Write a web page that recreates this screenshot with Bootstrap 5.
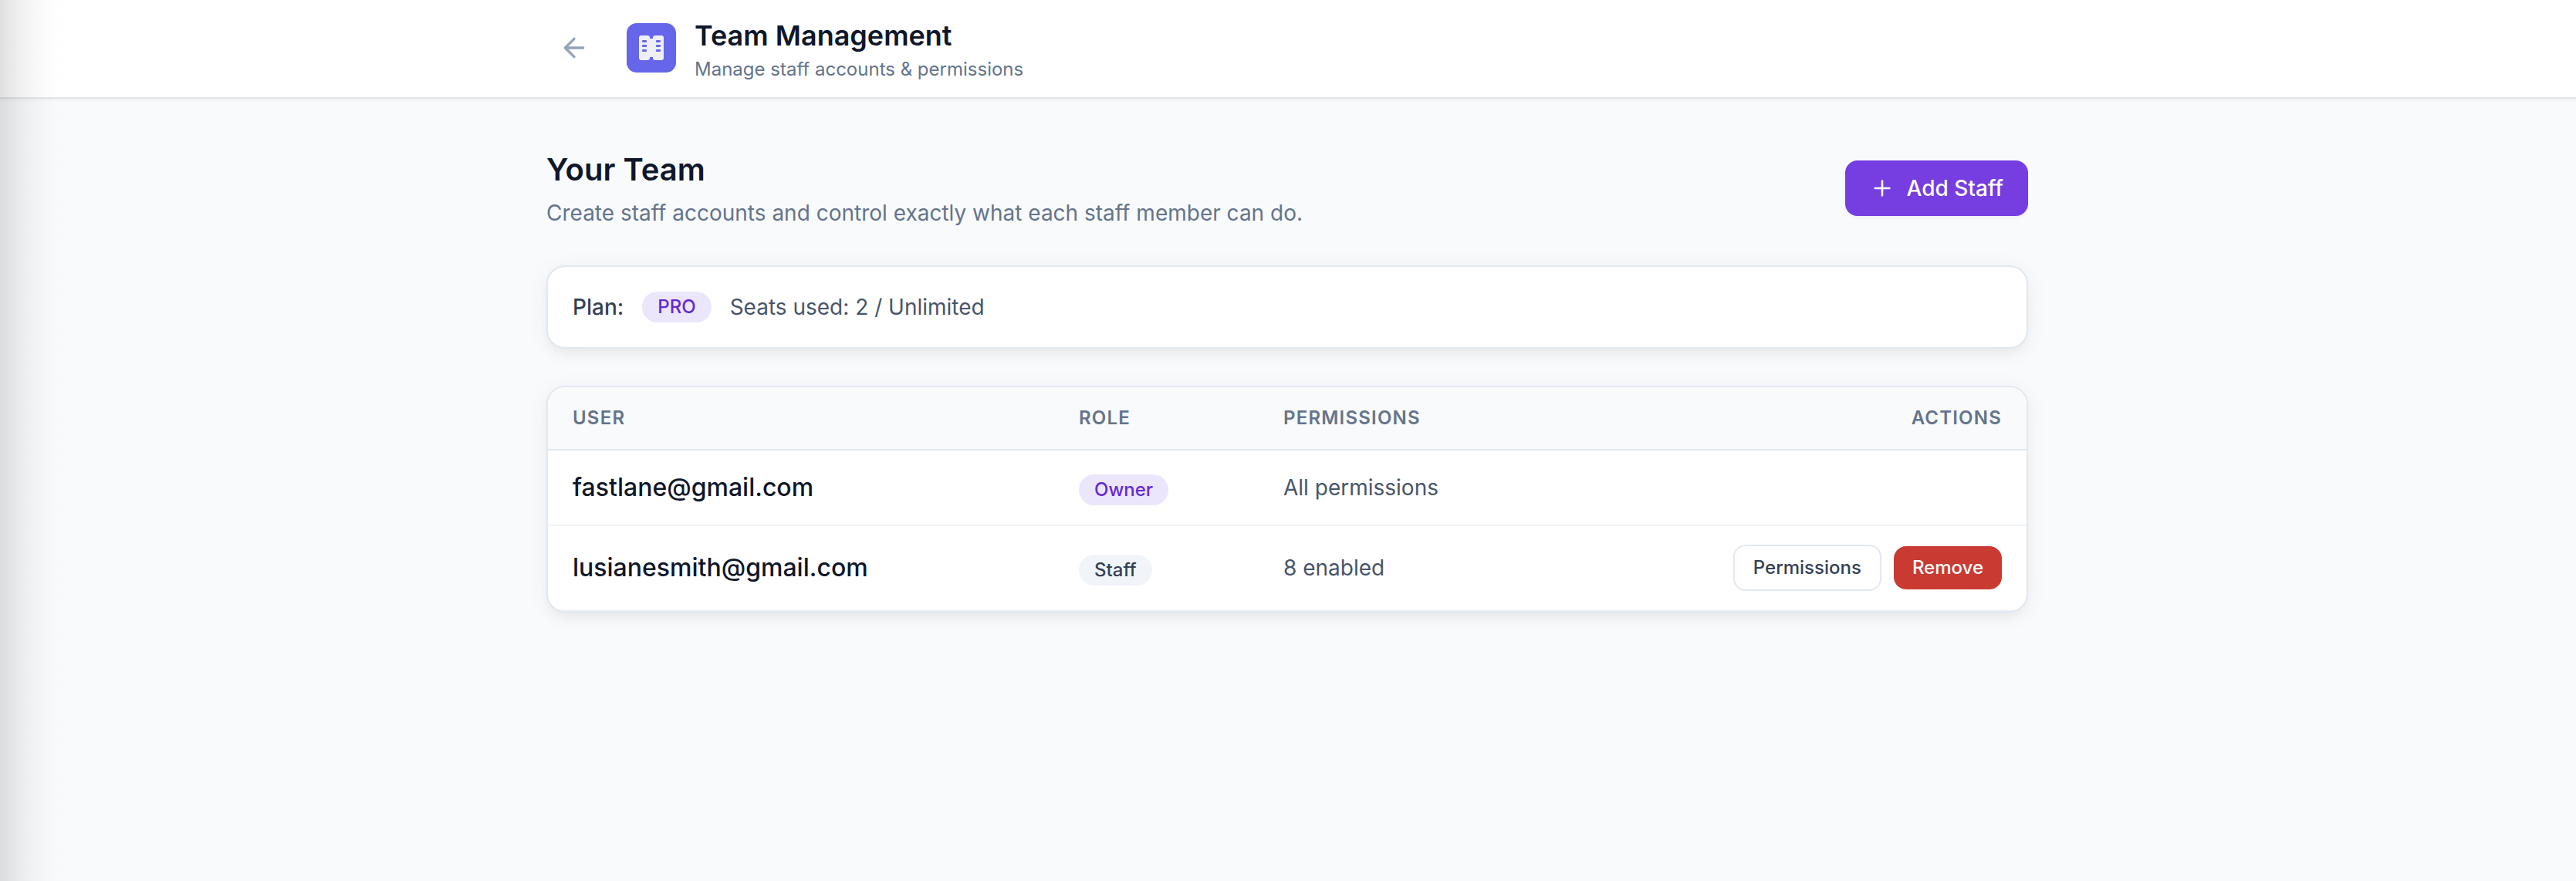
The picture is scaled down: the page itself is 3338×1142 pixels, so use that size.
<!DOCTYPE html>
<html lang="en">
<head>
<meta charset="utf-8">
<meta name="viewport" content="width=device-width, initial-scale=1">
<title>Team Management</title>
<link rel="stylesheet" href="https://cdn.jsdelivr.net/npm/bootstrap@5.3.0/dist/css/bootstrap.min.css">
<style>
body{font-family:Inter,sans-serif;background:#f8fafc;color:#0f172a;min-height:1142px}
.page-wrap{width:1920px;margin-left:708px}
.topbar{height:128px;background:#fff;border-bottom:2px solid #e0e5ea;box-shadow:0 2px 4px rgba(0,0,0,.04)}
.topbar .page-wrap{height:124px}
.back-link{width:72px;height:72px;color:#94a3b8}
.app-tile{width:64px;height:64px;border-radius:13px;background:#6566e9;margin-left:32px;margin-right:24px}
.app-text{padding-top:24px}
.app-title{font-size:36px;line-height:45px;font-weight:600}
.app-sub{font-size:24px;line-height:32px;color:#64748b;margin-top:5px}
.main-area{padding-top:64px}
.sect-title{font-size:40px;line-height:56px;font-weight:600}
.sect-sub{font-size:28px;line-height:40px;color:#64748b;margin-top:8px}
.btn-add{height:72px;border-radius:16px;font-size:28px;font-weight:500;padding:0 32px;border:0;box-shadow:0 2px 4px rgba(0,0,0,.05)}
.btn-add,.btn-add:hover{background:#763de0;color:#fff}
.panel{border:2px solid #e2e8f0;border-radius:24px;background:#fff;box-shadow:0 4px 30px rgba(0,0,0,.05),0 8px 16px -4px rgba(0,0,0,.05);overflow:hidden;margin-top:48px}
.plan-row{height:108px;padding:0 32px;gap:24px;font-size:28px;color:#475569}
.plan-key{color:#334155;font-weight:500}
.pill{display:inline-block;font-size:24px;line-height:32px;padding:4px 20px;border-radius:20px;font-weight:500}
.pill-violet{background:#ebe6fb;color:#6529d2}
.pill-slate{background:#f1f5f9;color:#334155}
.team-table{table-layout:fixed;border-collapse:separate;border-spacing:0;--bs-table-bg:transparent}
.team-table th{font-size:24px;line-height:32px;font-weight:600;letter-spacing:1.2px;color:#64748b;background:#f8fafc;padding:24px 32px;border-bottom:2px solid #e2e8f0}
.team-table td{font-size:28px;line-height:40px;color:#475569;padding:0 32px;border-bottom:2px solid #f1f5f9;height:98px}
.team-table tr.tall td{height:110px}
.team-table td.mail{font-size:32px;font-weight:500;color:#0f172a}
.team-table td.role{padding-top:6px}
.role .pill{display:block;width:fit-content}
.c-user{width:656px}.c-role{width:265px}.c-perm{width:420px}
.btn-row{border-radius:16px;font-size:24px;line-height:32px;font-weight:500;padding:12px 24px}
.btn-line,.btn-line:hover{border:2px solid #e2e8f0;background:#fff;color:#334155}
.btn-del,.btn-del:hover{border:0;background:#c93a33;color:#fff}
.edge-shade{position:absolute;left:0;top:0;width:90px;height:1142px;background:linear-gradient(90deg,rgba(0,0,0,.12),rgba(0,0,0,.055) 28px,rgba(0,0,0,.018) 52px,rgba(0,0,0,.004) 72px,rgba(0,0,0,0) 88px);pointer-events:none}
</style>
</head>
<body>
<header class="topbar">
  <div class="page-wrap d-flex align-items-center">
    <a href="#" class="back-link d-flex align-items-center justify-content-center" aria-label="Back"><svg width="40" height="40" viewBox="0 0 24 24" fill="none" stroke="currentColor" stroke-width="2" stroke-linecap="round" stroke-linejoin="round"><path d="M12 19l-7-7 7-7M19 12H5"/></svg></a>
    <div class="app-tile d-flex align-items-center justify-content-center">
      <svg width="32" height="32" viewBox="0 0 32 32">
        <path fill="#efeffc" d="M3 0h8a3 3 0 0 1 3 3v1h4V3a3 3 0 0 1 3-3h8a3 3 0 0 1 3 3v26a3 3 0 0 1-3 3h-8a3 3 0 0 1-3-3v-1h-4v1a3 3 0 0 1-3 3H3a3 3 0 0 1-3-3V3a3 3 0 0 1 3-3z"/>
        <g fill="#6566e9"><rect x="4" y="6" width="6" height="3" rx="1"/><rect x="4" y="12" width="6" height="3" rx="1"/><rect x="4" y="18" width="6" height="3" rx="1"/><rect x="22" y="6" width="6" height="3" rx="1"/><rect x="22" y="12" width="6" height="3" rx="1"/><rect x="22" y="18" width="6" height="3" rx="1"/></g>
      </svg>
    </div>
    <div class="app-text align-self-start">
      <div class="app-title">Team Management</div>
      <div class="app-sub">Manage staff accounts &amp; permissions</div>
    </div>
  </div>
</header>
<main class="page-wrap main-area">
  <div class="d-flex align-items-center justify-content-between">
    <div>
      <h1 class="sect-title mb-0">Your Team</h1>
      <p class="sect-sub mb-0">Create staff accounts and control exactly what each staff member can do.</p>
    </div>
    <button type="button" class="btn btn-add d-flex align-items-center gap-3"><svg width="32" height="32" viewBox="0 0 24 24" fill="none" stroke="currentColor" stroke-width="2" stroke-linecap="round"><path d="M12 5v14M5 12h14"/></svg>Add Staff</button>
  </div>
  <section class="panel plan-row d-flex align-items-center">
    <span class="plan-key">Plan:</span>
    <span class="pill pill-violet">PRO</span>
    <span>Seats used: 2 / Unlimited</span>
  </section>
  <section class="panel">
    <table class="table team-table align-middle mb-0">
      <thead>
        <tr><th class="c-user">USER</th><th class="c-role">ROLE</th><th class="c-perm">PERMISSIONS</th><th class="text-end">ACTIONS</th></tr>
      </thead>
      <tbody>
        <tr>
          <td class="mail">fastlane@gmail.com</td>
          <td class="role"><span class="pill pill-violet">Owner</span></td>
          <td>All permissions</td>
          <td></td>
        </tr>
        <tr class="tall">
          <td class="mail">lusianesmith@gmail.com</td>
          <td class="role"><span class="pill pill-slate">Staff</span></td>
          <td>8 enabled</td>
          <td><div class="d-flex justify-content-end align-items-center gap-3"><button type="button" class="btn btn-row btn-line">Permissions</button><button type="button" class="btn btn-row btn-del">Remove</button></div></td>
        </tr>
      </tbody>
    </table>
  </section>
</main>
<div class="edge-shade"></div>
<script src="https://cdn.jsdelivr.net/npm/bootstrap@5.3.0/dist/js/bootstrap.bundle.min.js"></script>
</body>
</html>
